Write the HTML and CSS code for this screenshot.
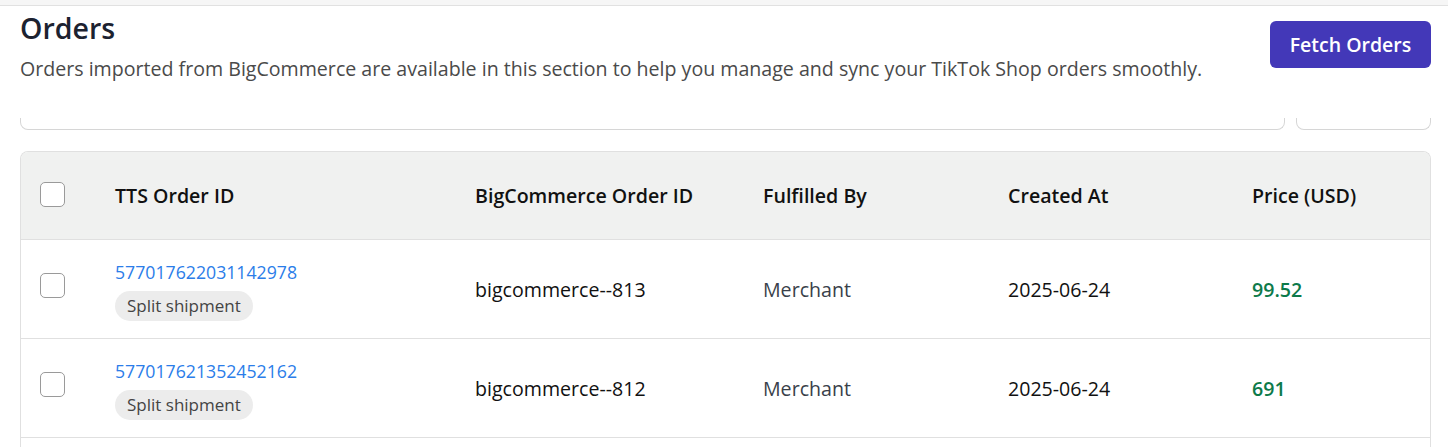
FILE: index.html
```html
<!DOCTYPE html>
<html>
  <head>
    <title>Orders</title>
    <link rel="stylesheet" href="styles.css">
  </head>
  <body>
    <div class="topbar"></div>

    <div class="page">
      <div class="page-head">
        <div>
          <h1>Orders</h1>
          <p class="subtitle">Orders imported from BigCommerce are available in this section to help you manage and sync your TikTok Shop orders smoothly.</p>
        </div>
        <button class="primary">Fetch Orders</button>
      </div>

      <div class="toolbar">
        <div class="search"></div>
        <div class="filter"></div>
      </div>

      <div class="orders">
        <div class="row head">
          <div class="cell check"><span class="box"></span></div>
          <div class="cell">TTS Order ID</div>
          <div class="cell">BigCommerce Order ID</div>
          <div class="cell">Fulfilled By</div>
          <div class="cell">Created At</div>
          <div class="cell">Price (USD)</div>
        </div>

        <div class="row">
          <div class="cell check"><span class="box"></span></div>
          <div class="cell stack">
            <a href="#" class="order-link">577017622031142978</a>
            <span class="tag">Split shipment</span>
          </div>
          <div class="cell">bigcommerce--813</div>
          <div class="cell muted">Merchant</div>
          <div class="cell">2025-06-24</div>
          <div class="cell price">99.52</div>
        </div>

        <div class="row">
          <div class="cell check"><span class="box"></span></div>
          <div class="cell stack">
            <a href="#" class="order-link">577017621352452162</a>
            <span class="tag">Split shipment</span>
          </div>
          <div class="cell">bigcommerce--812</div>
          <div class="cell muted">Merchant</div>
          <div class="cell">2025-06-24</div>
          <div class="cell price">691</div>
        </div>

        <div class="row"></div>
      </div>
    </div>
  </body>
</html>
```

FILE: styles.css
```css
body {
  margin: 0;
  font-family: "Open Sans", Lato, sans-serif;
  color: #111;
  background: #fff;
  overflow: hidden;
}
.topbar {
  height: 5px;
  background: #f6f6f6;
  border-bottom: 1px solid #e1e1e1;
}
.page {
  padding: 0 17px 0 20px;
}
.page-head {
  display: flex;
  justify-content: space-between;
  align-items: flex-start;
}
h1 {
  margin: 4px 0 0;
  font-size: 28.5px;
  line-height: 36px;
  font-weight: 600;
  color: #1c2230;
}
.subtitle {
  margin: 11px 0 0;
  font-size: 19.6px;
  line-height: 24px;
  color: #4a4a4a;
}
button.primary {
  margin-top: 15px;
  height: 47px;
  width: 161px;
  padding: 0;
  background: #4338b8;
  color: #fff;
  border: none;
  border-radius: 6px;
  font-family: inherit;
  font-size: 19.5px;
  font-weight: 600;
  cursor: pointer;
}
.toolbar {
  display: flex;
  gap: 11px;
  margin-top: 37px;
  height: 12px;
}
.search,
.filter {
  border: 1px solid #d6d6d6;
  border-top: none;
  border-radius: 0 0 8px 8px;
}
.search {
  flex-grow: 1;
}
.filter {
  width: 133px;
}
.orders {
  margin-top: 21px;
  border: 1px solid #e0e0e0;
  border-bottom: none;
  border-radius: 8px 8px 0 0;
  overflow: hidden;
}
.row {
  display: grid;
  grid-template-columns: 94px 360px 288px 245px 244px 1fr;
  height: 98px;
  border-top: 1px solid #e0e0e0;
}
.row.head {
  height: 87px;
  border-top: none;
  background: #f0f1f0;
  font-weight: 600;
}
.cell {
  display: flex;
  align-items: center;
  font-size: 19.6px;
}
.cell.check {
  padding-left: 19px;
}
.box {
  width: 23px;
  height: 23px;
  border: 1px solid #9a9a9a;
  border-radius: 5px;
  background: #fff;
  margin-bottom: 7px;
}
.head .box {
  margin-bottom: 3px;
}
.stack {
  flex-direction: column;
  align-items: flex-start;
  justify-content: center;
  gap: 8px;
  padding-top: 4px;
}
.order-link {
  color: #2b7de9;
  text-decoration: none;
  font-size: 17.7px;
  line-height: 22px;
}
.tag {
  background: #ececec;
  color: #444;
  font-size: 17px;
  line-height: 22px;
  padding: 4px 12px;
  border-radius: 15px;
}
.muted {
  color: #3a3f4a;
}
.price {
  color: #0d7a4a;
  font-weight: 600;
}
```
